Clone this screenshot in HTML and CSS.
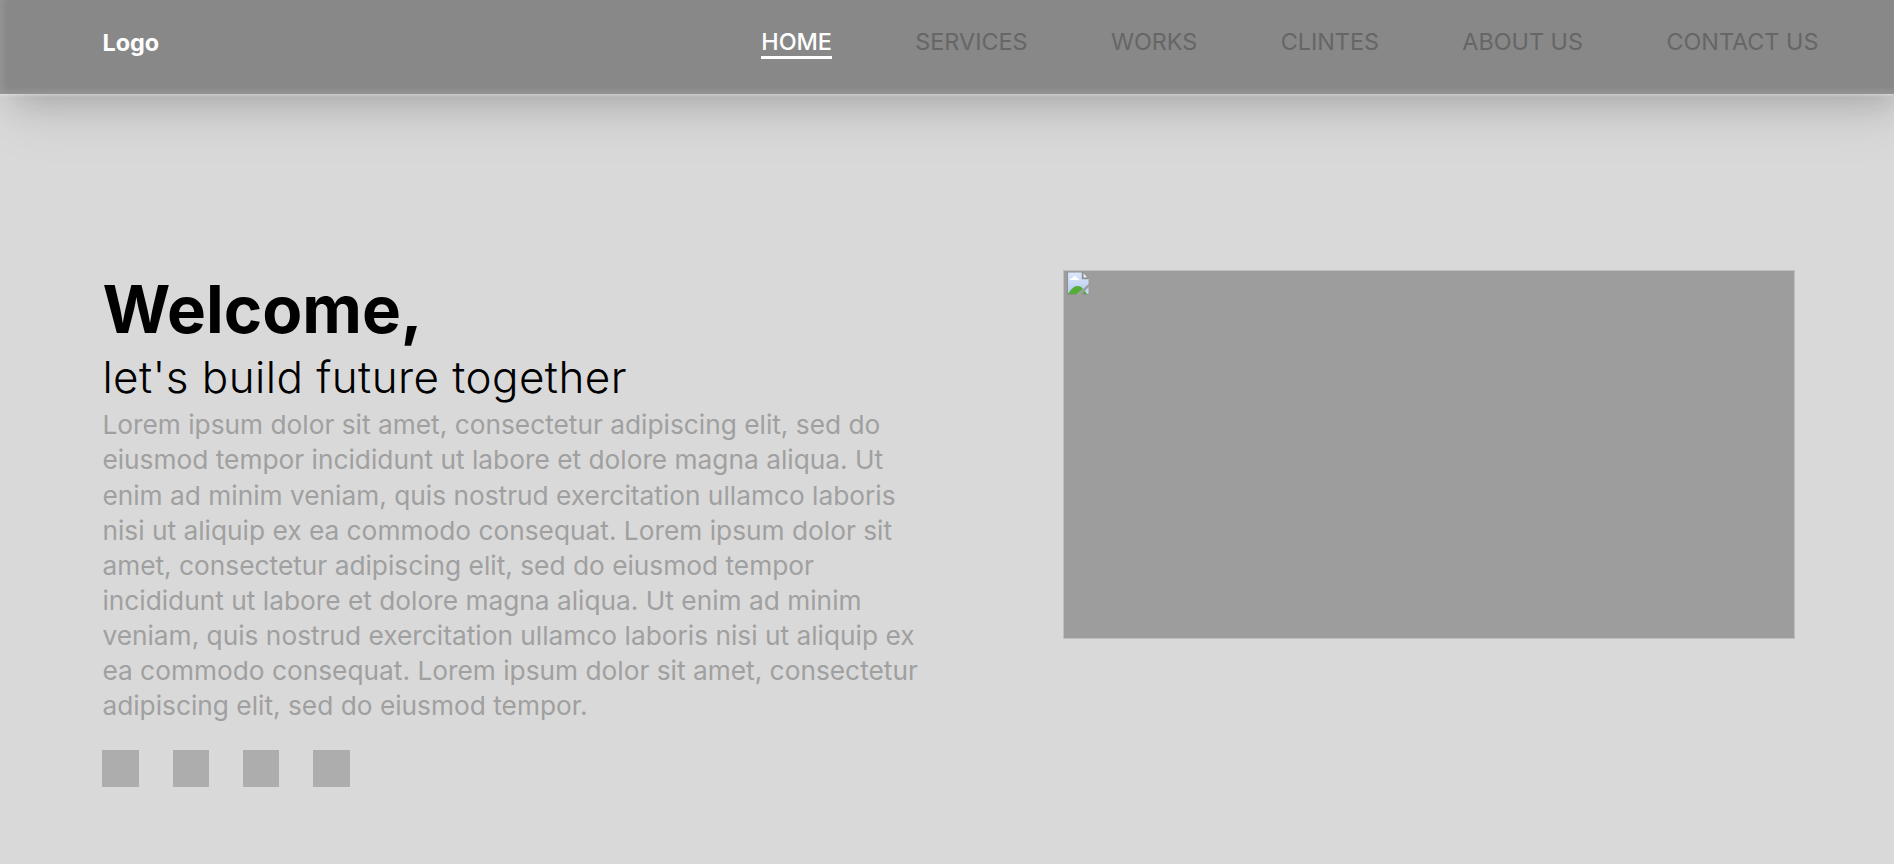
FILE: index.html
```html
<!DOCTYPE html>
<html lang="en">
<head>
<meta charset="utf-8">
<title>Welcome</title>
<link rel="stylesheet" href="styles.css">
</head>
<body>
<header class="header">
  <div class="logo">Logo</div>
  <nav class="nav">
    <a class="link active">HOME</a>
    <a class="link">SERVICES</a>
    <a class="link">WORKS</a>
    <a class="link">CLINTES</a>
    <a class="link">ABOUT US</a>
    <a class="link">CONTACT US</a>
  </nav>
</header>
<main class="hero">
  <section class="intro">
    <h1 class="title">Welcome,</h1>
    <h2 class="subtitle">let's build future together</h2>
    <p class="text">Lorem ipsum dolor sit amet, consectetur adipiscing elit, sed do<br>eiusmod tempor incididunt ut labore et dolore magna aliqua. Ut<br>enim ad minim veniam, quis nostrud exercitation ullamco laboris<br>nisi ut aliquip ex ea commodo consequat. Lorem ipsum dolor sit<br>amet, consectetur adipiscing elit, sed do eiusmod tempor<br>incididunt ut labore et dolore magna aliqua. Ut enim ad minim<br>veniam, quis nostrud exercitation ullamco laboris nisi ut aliquip ex<br>ea commodo consequat. Lorem ipsum dolor sit amet, consectetur<br>adipiscing elit, sed do eiusmod tempor.</p>
    <div class="socials"><span class="social"></span><span class="social"></span><span class="social"></span><span class="social"></span></div>
  </section>
  <div class="picture">
    <svg class="broken" width="23" height="23" viewBox="0 0 23 23">
      <defs><linearGradient id="sky" x1="0" y1="0" x2="0" y2="1"><stop offset="0" stop-color="#dce8fb"/><stop offset="1" stop-color="#b4caf2"/></linearGradient></defs>
      <path d="M1 0H15V7H21.500V12L10 22.500H1Z" fill="url(#sky)"/>
      <path d="M21.500 15V22.500H15Z" fill="#c4d6f5"/>
      <path d="M1 22C4 17 7 14 10.500 14C13 14 15 15 16 17L10 22Z" fill="#54ad37"/>
      <path d="M18 19L20 22H15Z" fill="#54ad37"/>
      <path d="M3 8C3 6.500 4.500 6 5.500 6C6 3.500 9.500 3.500 10 6C11.500 6 12 7 12 8Z" fill="#fff"/>
      <path d="M16.500 1V5.500H20.500Z" fill="#f4f4f4"/>
      <path d="M.5 22.500V0H16L21.500 6M0 22.500H10M15 22.500H22" fill="none" stroke="#8f8f8f" stroke-width="1"/>
      <path d="M15.500 0V6.500H21" fill="none" stroke="#8f8f8f" stroke-width="1.500"/>
    </svg>
  </div>
</main>
</body>
</html>
```
FILE: styles.css
```css
* { box-sizing: border-box; margin: 0; padding: 0; }
body {
  background: #d9d9d9;
  font-family: Inter, "Liberation Sans", sans-serif;
  height: 864px;
  overflow: hidden;
}
.header {
  position: relative;
  display: flex;
  justify-content: space-between;
  height: 94px;
  padding: 28px 75.6px 0 102.5px;
  background: #888;
  box-shadow: inset 3px -3px 6px rgba(255,255,255,.12), 0 1px 3px rgba(255,255,255,.45), 8px 24px 56px rgba(0,0,0,.08), 8px 12px 32px -4px rgba(0,0,0,.17);
}
.logo { color: #fff; font-size: 23.4px; font-weight: 700; line-height: 29px; }
.nav { display: flex; gap: 83.4px; }
.link { height: 31px; color: #666; font-size: 23.36px; line-height: 28px; white-space: nowrap; }
.active { color: #fff; font-weight: 500; border-bottom: 3px solid #fff; }
.hero { display: flex; justify-content: space-between; padding: 176px 99px 0 102.4px; }
.intro { width: 830px; }
.title { font-size: 65.4px; font-weight: 700; line-height: 78px; padding-top: 1px; }
.subtitle { font-size: 44px; font-weight: 300; line-height: 56px; letter-spacing: .43px; }
.text { color: #a0a0a0; font-size: 26.29px; line-height: 35.1px; white-space: nowrap; padding-top: 2.4px; }
.socials { display: flex; gap: 33.8px; margin-top: 26.6px; }
.social { width: 36.5px; height: 37px; background: #adadad; }
.picture { width: 732px; height: 369px; padding: 1px 3px; background: #9d9d9d; border: 1px solid #bebebe; }
.broken { display: block; }
```
